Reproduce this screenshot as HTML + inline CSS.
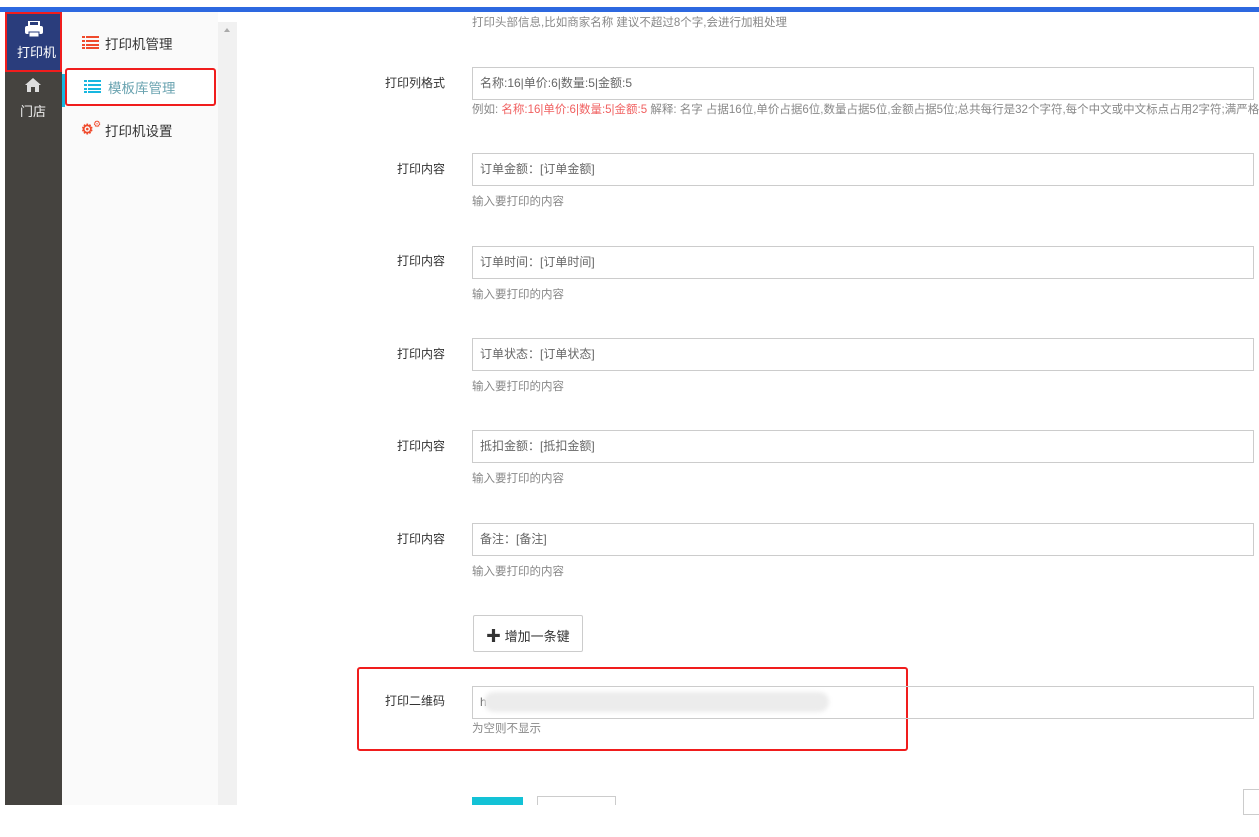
<!DOCTYPE html>
<html><head><meta charset="utf-8"><style>
*{margin:0;padding:0;box-sizing:border-box}
body{width:1259px;height:837px;background:#fff;position:relative;overflow:hidden;font-family:"Liberation Sans","Noto Sans CJK SC",sans-serif;font-size:12px;color:#333}
.a{position:absolute}
.lbl{position:absolute;font-size:12px;color:#333;margin-top:-1px}
.inp{position:absolute;left:472px;width:782px;height:33px;border:1px solid #ccc;font-size:12px;color:#666;padding:8px 7px;line-height:14px}
.help{position:absolute;left:472px;font-size:11.5px;color:#888;margin-top:-1px}
</style></head><body>
<div class="a" style="left:0;top:7px;width:1259px;height:5px;background:#2d68e0"></div>
<div class="a" style="left:5px;top:12px;width:57px;height:793px;background:#45433f"></div>
<div class="a" style="left:5px;top:12px;width:57px;height:60px;background:#2a3d7c;border:2px solid #f01d1d"></div>
<svg class="a" style="left:24px;top:21px" width="20" height="17" viewBox="0 0 20 17"><rect x="5" y="0" width="10" height="5" fill="none" stroke="#fff" stroke-width="2"/><rect x="1" y="5" width="18" height="8" rx="2" fill="#fff"/><rect x="5" y="11" width="10" height="5" fill="#fff" stroke="#2a3d7c" stroke-width="1"/></svg>
<div class="a" style="left:17px;top:42px;color:#fff;font-size:13px">打印机</div>
<svg class="a" style="left:25px;top:78px" width="16" height="14" viewBox="0 0 16 14"><path d="M8 0 L16 7 L14 7 L14 14 L10 14 L10 9 L6 9 L6 14 L2 14 L2 7 L0 7 Z" fill="#ddd"/></svg>
<div class="a" style="left:20px;top:101px;color:#eee;font-size:13px">门店</div>
<div class="a" style="left:62px;top:12px;width:156px;height:793px;background:#fafafa"></div>
<div class="a" style="left:218px;top:22px;width:19px;height:783px;background:#f1f1f1"></div>
<div class="a" style="left:224px;top:28px;width:0;height:0;border-left:3px solid transparent;border-right:3px solid transparent;border-bottom:4px solid #aaa"></div>
<div class="a" style="left:62px;top:74px;width:3px;height:33px;background:#18b7e0"></div>
<svg class="a" style="left:82px;top:36px" width="17" height="13"><g fill="#f04a2c"><rect x="0" y="0" width="3" height="2"/><rect x="4" y="0" width="13" height="2"/><rect x="0" y="4" width="3" height="2"/><rect x="4" y="4" width="13" height="2"/><rect x="0" y="8" width="3" height="2"/><rect x="4" y="8" width="13" height="2"/><rect x="0" y="11" width="3" height="2"/><rect x="4" y="11" width="13" height="2"/></g></svg>
<div class="a" style="left:105px;top:33px;font-size:13.5px;color:#333">打印机管理</div>
<div class="a" style="left:65px;top:68px;width:151px;height:38px;border:2px solid #f01d1d;border-radius:3px;background:#fff"></div>
<svg class="a" style="left:84px;top:80px" width="17" height="13"><g fill="#18b7e0"><rect x="0" y="0" width="3" height="2"/><rect x="4" y="0" width="13" height="2"/><rect x="0" y="4" width="3" height="2"/><rect x="4" y="4" width="13" height="2"/><rect x="0" y="8" width="3" height="2"/><rect x="4" y="8" width="13" height="2"/><rect x="0" y="11" width="3" height="2"/><rect x="4" y="11" width="13" height="2"/></g></svg>
<div class="a" style="left:108px;top:77px;font-size:13.5px;color:#6aa3b0">模板库管理</div>
<div class="a" style="left:81px;top:121px;color:#f04a2c;font-size:14px;font-weight:bold">⚙</div>
<div class="a" style="left:93px;top:119px;color:#f04a2c;font-size:9px">⚙</div>
<div class="a" style="left:105px;top:120px;font-size:13.5px;color:#333">打印机设置</div>

<div class="help" style="top:15px">打印头部信息,比如商家名称 建议不超过8个字,会进行加粗处理</div>
<div class="lbl" style="left:385px;top:75px">打印列格式</div>
<div class="inp" style="top:67px">名称:16|单价:6|数量:5|金额:5</div>
<div class="help" style="top:102px;white-space:nowrap">例如: <span style="color:#f06060">名称:16|单价:6|数量:5|金额:5</span> 解释: 名字 占据16位,单价占据6位,数量占据5位,金额占据5位;总共每行是32个字符,每个中文或中文标点占用2字符;满严格</div>

<div class="lbl" style="left:397px;top:161px">打印内容</div>
<div class="inp" style="top:153px">订单金额：[订单金额]</div>
<div class="help" style="top:194px">输入要打印的内容</div>
<div class="lbl" style="left:397px;top:253px">打印内容</div>
<div class="inp" style="top:246px">订单时间：[订单时间]</div>
<div class="help" style="top:287px">输入要打印的内容</div>
<div class="lbl" style="left:397px;top:346px">打印内容</div>
<div class="inp" style="top:338px">订单状态：[订单状态]</div>
<div class="help" style="top:379px">输入要打印的内容</div>
<div class="lbl" style="left:397px;top:438px">打印内容</div>
<div class="inp" style="top:430px">抵扣金额：[抵扣金额]</div>
<div class="help" style="top:471px">输入要打印的内容</div>
<div class="lbl" style="left:397px;top:531px">打印内容</div>
<div class="inp" style="top:523px">备注：[备注]</div>
<div class="help" style="top:564px">输入要打印的内容</div>

<div class="a" style="left:473px;top:615px;width:110px;height:37px;border:1px solid #ccc;border-radius:2px;padding:9px 0 0 12px;font-size:13px;color:#333"><b style="font-size:15px">✚</b> 增加一条键</div>

<div class="a" style="left:357px;top:667px;width:551px;height:84px;border:2px solid #f01d1d;border-radius:3px"></div>
<div class="lbl" style="left:385px;top:693px">打印二维码</div>
<div class="inp" style="top:686px">h</div>
<div class="a" style="left:484px;top:692px;width:345px;height:20px;background:#ececec;border-radius:10px;filter:blur(2px)"></div>
<div class="help" style="top:721px">为空则不显示</div>

<div class="a" style="left:472px;top:797px;width:51px;height:12px;background:#13c2d6"></div>
<div class="a" style="left:537px;top:796px;width:79px;height:13px;border:1px solid #ccc;border-bottom:none"></div>
<div class="a" style="left:0;top:805px;width:1259px;height:32px;background:#fff"></div>
<div class="a" style="left:1243px;top:789px;width:20px;height:26px;border:1px solid #ccc;background:#fff"></div>
</body></html>
